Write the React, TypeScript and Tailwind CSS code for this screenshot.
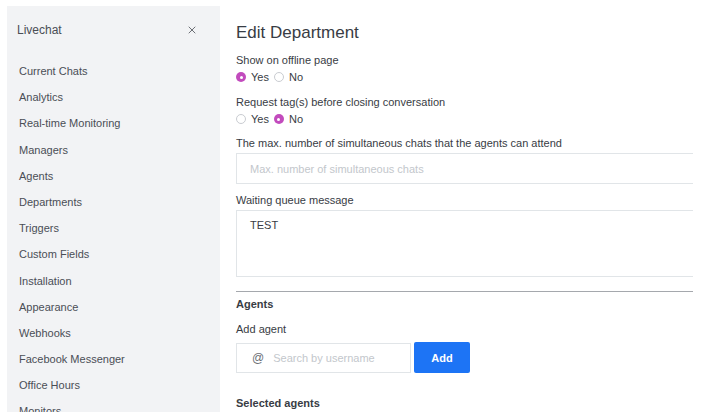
import { X } from 'lucide-react'

const menu = [
  'Current Chats',
  'Analytics',
  'Real-time Monitoring',
  'Managers',
  'Agents',
  'Departments',
  'Triggers',
  'Custom Fields',
  'Installation',
  'Appearance',
  'Webhooks',
  'Facebook Messenger',
  'Office Hours',
  'Monitors',
]

function Radio({ checked, label }: { checked?: boolean; label: string }) {
  return (
    <span className="flex items-center gap-[5px]">
      {checked ? (
        <span className="flex h-[10px] w-[10px] items-center justify-center rounded-full bg-[#c24bbd]">
          <span className="h-[3px] w-[3px] rounded-full bg-white" />
        </span>
      ) : (
        <span className="h-[10px] w-[10px] rounded-full border border-[#c9ccd1] bg-white" />
      )}
      <span>{label}</span>
    </span>
  )
}

export default function App() {
  return (
    <div className="flex h-[419px] w-[701px] overflow-hidden bg-white font-['Liberation_Sans',Arial,sans-serif] text-[#383c44]">
      {/* Sidebar */}
      <aside className="ml-[7px] mt-[6px] h-[406px] w-[213px] shrink-0 overflow-hidden bg-[#f2f3f5]">
        <div className="flex items-center justify-between pl-[10px] pr-[22px] pt-[16px]">
          <span className="text-[12px] leading-[16px] text-[#4a4e55]">Livechat</span>
          <X className="h-[12px] w-[12px] text-[#4a4e55]" strokeWidth={1.6} />
        </div>
        <nav className="mt-[25px] flex flex-col pl-[12px]">
          {menu.map((m) => (
            <div key={m} className="h-[26.2px] text-[11px] leading-[16px] text-[#4a4e55]">
              {m}
            </div>
          ))}
        </nav>
      </aside>

      {/* Content */}
      <main className="flex-1 pl-[16px] pr-[8px] pt-[21px] text-[11px] leading-[16px]">
        <h1 className="text-[17px] leading-[24px] text-[#383c44]">Edit Department</h1>

        <div className="mt-[7px]">Show on offline page</div>
        <div className="mt-[1px] flex gap-[5px]">
          <Radio checked label="Yes" />
          <Radio label="No" />
        </div>

        <div className="mt-[9px]">Request tag(s) before closing conversation</div>
        <div className="mt-[1px] flex gap-[5px]">
          <Radio label="Yes" />
          <Radio checked label="No" />
        </div>

        <div className="mt-[8px]">The max. number of simultaneous chats that the agents can attend</div>
        <div className="mt-[2px] flex h-[31px] items-center border border-r-0 border-[#e1e5e8] pl-[13px] text-[#c3c7cc]">
          Max. number of simultaneous chats
        </div>

        <div className="mt-[8px]">Waiting queue message</div>
        <div className="mt-[2px] h-[67px] border border-r-0 border-[#e1e5e8] pl-[13px] pt-[6px]">
          TEST
        </div>

        <div className="mt-[14px] h-px bg-[#a5a8ad]" />

        <div className="mt-[4px] font-bold">Agents</div>
        <div className="mt-[9px]">Add agent</div>
        <div className="mt-[5px] flex items-center gap-[3px]">
          <div className="flex h-[30px] w-[175px] items-center border border-[#e1e5e8] pl-[15px]">
            <span className="text-[12px] text-[#6c6f75]">@</span>
            <span className="ml-[9px] text-[#c3c7cc]">Search by username</span>
          </div>
          <button className="flex h-[31px] w-[56px] items-center justify-center rounded-[2px] bg-[#1d74f5] font-bold text-white">
            Add
          </button>
        </div>

        <div className="mt-[22px] font-bold">Selected agents</div>
      </main>
    </div>
  )
}
